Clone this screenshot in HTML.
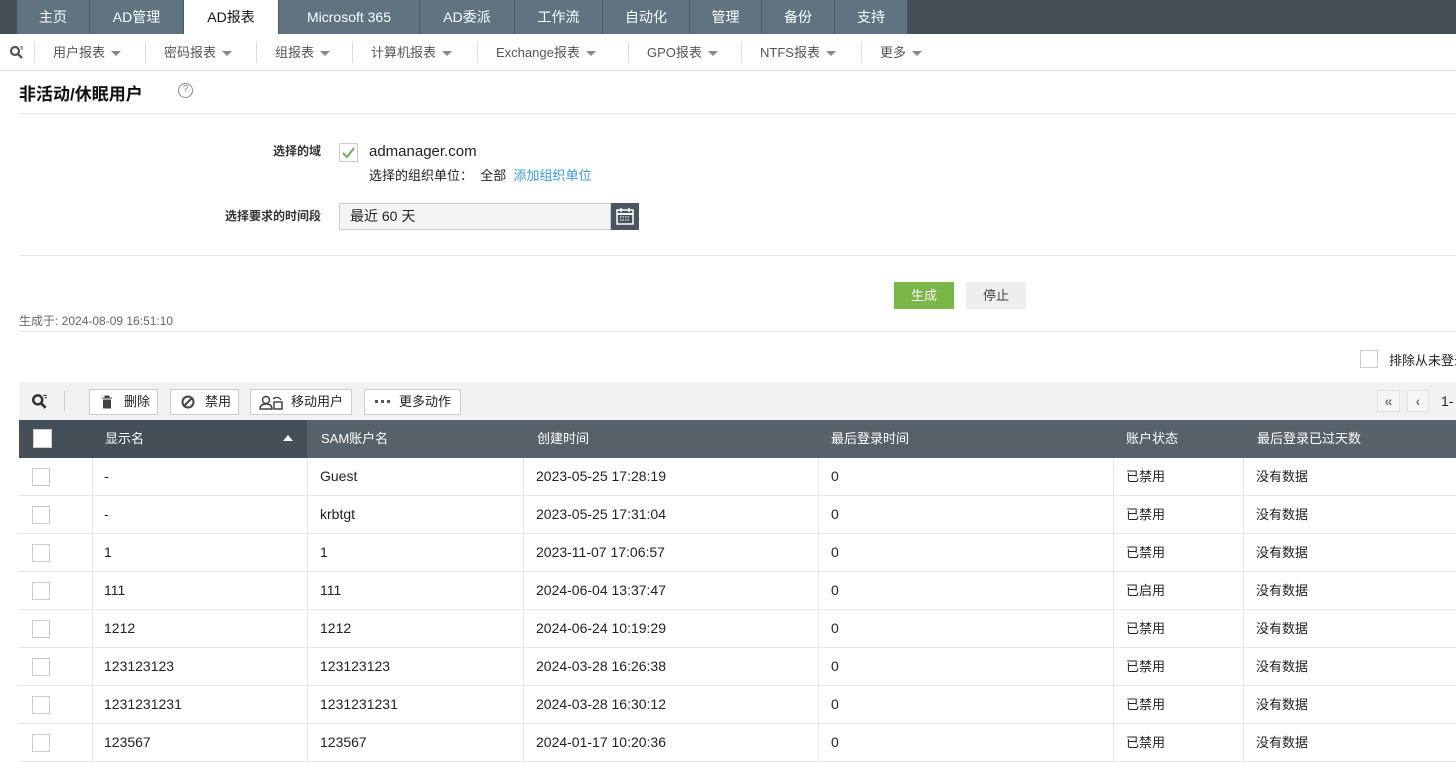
<!DOCTYPE html><html><head><meta charset="utf-8"><style>
*{box-sizing:border-box;margin:0;padding:0}
body{width:1456px;height:741px;overflow:hidden;background:#fff;font-family:"Liberation Sans","Noto Sans CJK SC",sans-serif;font-size:13px;color:#222;position:relative}
.abs{position:absolute;white-space:nowrap}
.top{left:0;top:0;width:1456px;height:34px;background:#434e56}
.tab{position:absolute;top:0;height:34px;background:#5f7480;color:#fff;font-size:14px;line-height:34px;text-align:center;border-right:1px solid #4a5a64}
.tab.act{background:#fff;color:#111}
.sub{top:34px;left:0;width:1456px;height:37px;border-bottom:1px solid #e2e2e2}
.si{position:absolute;top:42px;height:21px;line-height:21px;color:#555;font-size:13px;border-left:1px solid #ddd;padding-left:18px;white-space:nowrap}
.car{display:inline-block;width:0;height:0;border-left:5px solid transparent;border-right:5px solid transparent;border-top:5px solid #888;margin-left:6px;vertical-align:middle}
.hl{height:1px;background:#e8e8e8}
.lab{font-size:12px;color:#333;text-align:right;width:120px;font-weight:bold}
.btn{position:absolute;top:389px;height:26px;border:1px solid #ccc;background:#fff;font-size:13px;line-height:24px;padding-left:34px;color:#222;white-space:nowrap}
.th{position:absolute;top:420px;height:38px;line-height:38px;color:#fff;font-size:13px;padding-left:13px}
.cb{position:absolute;width:18px;height:18px;border:1px solid #ccc;background:#fff}
.row{position:absolute;left:19px;width:1437px;height:38px;border-bottom:1px solid #e6e6e6}
.row span{position:absolute;top:0;line-height:37px;font-size:14px;color:#222}
.vl{position:absolute;top:0;width:1px;height:37px;background:#e6e6e6}
</style></head><body>
<div class="abs top"></div>
<div class="tab" style="left:17px;width:73px">主页</div>
<div class="tab" style="left:90px;width:94px">AD管理</div>
<div class="tab act" style="left:184px;width:95px">AD报表</div>
<div class="tab" style="left:279px;width:141px">Microsoft 365</div>
<div class="tab" style="left:420px;width:95px">AD委派</div>
<div class="tab" style="left:515px;width:88px">工作流</div>
<div class="tab" style="left:603px;width:87px">自动化</div>
<div class="tab" style="left:690px;width:72px">管理</div>
<div class="tab" style="left:762px;width:73px">备份</div>
<div class="tab" style="left:835px;width:73px">支持</div>
<div class="abs sub"></div>
<svg class="abs" style="left:9px;top:44px" width="16" height="16" viewBox="0 0 16 16"><circle cx="6" cy="7" r="4" fill="none" stroke="#555" stroke-width="2.2"/><path d="M9 10l4 4" stroke="#555" stroke-width="2.4"/><path d="M11 3h3M12 5h2" stroke="#555" stroke-width="1"/></svg>
<div class="si" style="left:34px">用户报表<i class="car"></i></div>
<div class="si" style="left:145px">密码报表<i class="car"></i></div>
<div class="si" style="left:256px">组报表<i class="car"></i></div>
<div class="si" style="left:352px">计算机报表<i class="car"></i></div>
<div class="si" style="left:477px">Exchange报表<i class="car"></i></div>
<div class="si" style="left:628px">GPO报表<i class="car"></i></div>
<div class="si" style="left:741px">NTFS报表<i class="car"></i></div>
<div class="si" style="left:861px">更多<i class="car"></i></div>
<div class="abs" style="left:19px;top:80px;font-size:17px;font-weight:bold;color:#111">非活动/休眠用户</div>
<div class="abs" style="left:178px;top:83px;width:15px;height:15px;border:1.5px solid #888;border-radius:50%;font-size:10px;line-height:12px;text-align:center;color:#888">?</div>
<div class="abs hl" style="left:19px;top:113px;width:1437px"></div>
<div class="abs lab" style="left:201px;top:142px">选择的域</div>
<div class="abs" style="left:339px;top:143px;width:19px;height:19px;border:1px solid #ccc;background:#fff"><svg width="17" height="17"><path d="M3 9l4 4 7-9" fill="none" stroke="#6ab04c" stroke-width="2"/></svg></div>
<div class="abs" style="left:369px;top:143px;font-size:15px">admanager.com</div>
<div class="abs" style="left:369px;top:165px;font-size:13px">选择的组织单位： &nbsp;全部 &nbsp;<span style="color:#3a9ad9">添加组织单位</span></div>
<div class="abs lab" style="left:201px;top:207px">选择要求的时间段</div>
<div class="abs" style="left:339px;top:203px;width:272px;height:27px;border:1px solid #ccc;background:#f4f4f4;padding-left:10px;line-height:25px;font-size:14px">最近 60 天</div>
<div class="abs" style="left:611px;top:203px;width:28px;height:27px;background:#4a5560"><svg width="28" height="27"><rect x="6" y="7" width="16" height="14" fill="none" stroke="#fff" stroke-width="1.5"/><path d="M6 11h16" stroke="#fff" stroke-width="2"/><path d="M10 5v4M18 5v4" stroke="#fff" stroke-width="1.5"/><path d="M9 14h10M9 17h10" stroke="#fff" stroke-width="1" stroke-dasharray="1.5 1"/></svg></div>
<div class="abs hl" style="left:19px;top:255px;width:1437px"></div>
<div class="abs" style="left:894px;top:282px;width:60px;height:27px;background:#7ab648;color:#fff;text-align:center;line-height:27px">生成</div>
<div class="abs" style="left:966px;top:282px;width:60px;height:27px;background:#eee;color:#444;text-align:center;line-height:27px">停止</div>
<div class="abs" style="left:19px;top:312px;font-size:12px;color:#666">生成于: 2024-08-09 16:51:10</div>
<div class="abs hl" style="left:19px;top:331px;width:1437px"></div>
<div class="cb" style="left:1360px;top:350px"></div>
<div class="abs" style="left:1389px;top:350px;font-size:13px">排除从未登录</div>
<div class="abs" style="left:19px;top:382px;width:1437px;height:38px;background:#f2f2f2"></div>
<svg class="abs" style="left:31px;top:392px" width="18" height="18" viewBox="0 0 16 16"><circle cx="6" cy="7" r="4" fill="none" stroke="#333" stroke-width="2.2"/><path d="M9 10l4 4" stroke="#333" stroke-width="2.4"/><path d="M11 3h3M12 5h2" stroke="#333" stroke-width="1"/></svg>
<div class="abs" style="left:64px;top:391px;width:1px;height:20px;background:#ccc"></div>
<div class="btn" style="left:89px;width:69px">删除<svg class="abs" style="left:10px;top:5px" width="14" height="14"><path d="M2 3h10M5 3V1h4v2M3.5 5h7v8h-7z" fill="#444" stroke="#444" stroke-width="1"/></svg></div>
<div class="btn" style="left:170px;width:69px">禁用<svg class="abs" style="left:10px;top:5px" width="14" height="14"><circle cx="7" cy="7" r="5.5" fill="none" stroke="#444" stroke-width="2"/><path d="M3.5 10.5l7-7" stroke="#444" stroke-width="2"/></svg></div>
<div class="btn" style="left:250px;width:102px;padding-left:40px">移动用户<svg class="abs" style="left:8px;top:5px" width="26" height="16"><circle cx="7" cy="5" r="3.5" fill="none" stroke="#444" stroke-width="1.5"/><path d="M1 14c0-4 3-5 6-5s6 1 6 5z" fill="none" stroke="#444" stroke-width="1.5"/><rect x="15" y="7" width="8" height="7" fill="none" stroke="#444" stroke-width="1.5"/><path d="M14 4a5 5 0 0 1 8 1" fill="none" stroke="#444" stroke-width="1.3"/></svg></div>
<div class="btn" style="left:364px;width:97px">更多动作<svg class="abs" style="left:10px;top:10px" width="18" height="4"><rect x="0" y="0" width="3" height="3" fill="#555"/><rect x="6" y="0" width="3" height="3" fill="#555"/><rect x="12" y="0" width="3" height="3" fill="#555"/></svg></div>
<div class="abs" style="left:1377px;top:390px;width:23px;height:22px;border:1px solid #e2e2e2;background:#f6f6f6;text-align:center;line-height:20px;color:#777;font-weight:bold;font-size:14px">«</div>
<div class="abs" style="left:1407px;top:390px;width:22px;height:22px;border:1px solid #e2e2e2;background:#f6f6f6;text-align:center;line-height:20px;color:#777;font-weight:bold;font-size:14px">‹</div>
<div class="abs" style="left:1441px;top:393px;font-size:14px">1-</div>
<div class="abs" style="left:19px;top:420px;width:1437px;height:38px;background:#576169"></div>
<div class="abs" style="left:19px;top:420px;width:73px;height:38px;background:#454f57"></div>
<div class="abs" style="left:92px;top:420px;width:215px;height:38px;background:#454f57"></div>
<div class="cb" style="left:33px;top:429px;width:19px;height:19px"></div>
<div class="th" style="left:92px">显示名</div>
<div class="abs" style="left:283px;top:435px;border-left:5px solid transparent;border-right:5px solid transparent;border-bottom:6px solid #fff"></div>
<div class="th" style="left:308px">SAM账户名</div>
<div class="th" style="left:524px">创建时间</div>
<div class="th" style="left:818px">最后登录时间</div>
<div class="th" style="left:1113px">账户状态</div>
<div class="th" style="left:1244px">最后登录已过天数</div>
<div id="rows"></div>
<script>
var d=[["-","Guest","2023-05-25 17:28:19","已禁用"],["-","krbtgt","2023-05-25 17:31:04","已禁用"],["1","1","2023-11-07 17:06:57","已禁用"],["111","111","2024-06-04 13:37:47","已启用"],["1212","1212","2024-06-24 10:19:29","已禁用"],["123123123","123123123","2024-03-28 16:26:38","已禁用"],["1231231231","1231231231","2024-03-28 16:30:12","已禁用"],["123567","123567","2024-01-17 10:20:36","已禁用"]];
var h="";d.forEach(function(r,i){var t=458+i*38;h+='<div class="row" style="top:'+t+'px"><div class="cb" style="left:13px;top:10px"></div><div class="vl" style="left:73px"></div><div class="vl" style="left:288px"></div><div class="vl" style="left:504px"></div><div class="vl" style="left:799px"></div><div class="vl" style="left:1094px"></div><div class="vl" style="left:1224px"></div><span style="left:85px">'+r[0]+'</span><span style="left:301px">'+r[1]+'</span><span style="left:517px">'+r[2]+'</span><span style="left:812px">0</span><span style="left:1107px;font-size:13px">'+r[3]+'</span><span style="left:1237px;font-size:13px">没有数据</span></div>';});
document.getElementById("rows").innerHTML=h;
</script>
</body></html>
